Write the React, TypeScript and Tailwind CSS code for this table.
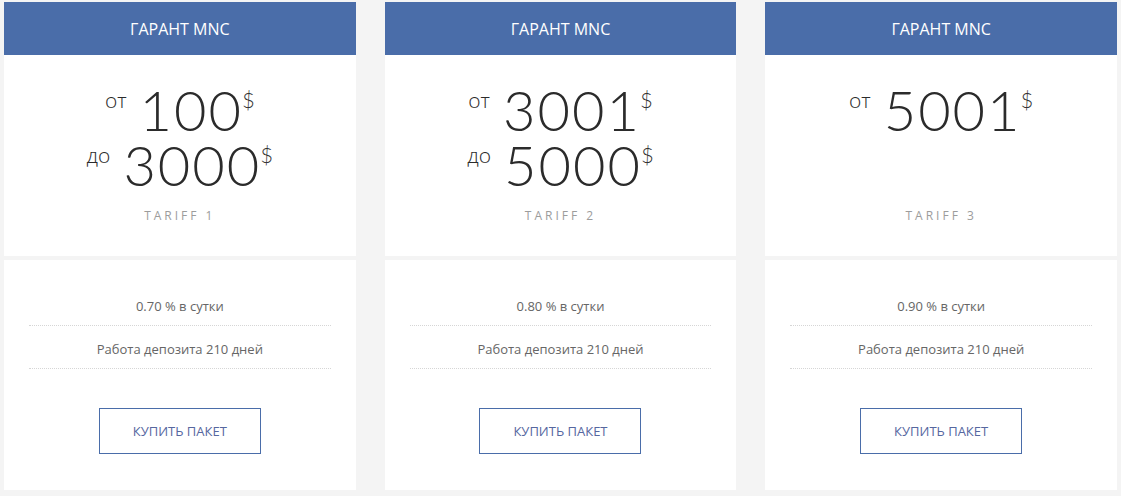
const tariffs = [
  { from: '100', to: '3000', name: 'TARIFF 1', rate: '0.70' },
  { from: '3001', to: '5000', name: 'TARIFF 2', rate: '0.80' },
  { from: '5001', to: null, name: 'TARIFF 3', rate: '0.90' },
];

const numFont = { fontFamily: '"Lato", "Open Sans", sans-serif' };
const textFont = { fontFamily: '"Open Sans", "Noto Sans", sans-serif' };

function PriceRow({ label, value }: { label: string; value: string }) {
  return (
    <div className="flex h-[55px] items-start justify-center">
      <span className="mt-[8px] mr-[13px] text-[21px] leading-none font-light text-[#2b2b2b]" style={textFont}>
        {label}
      </span>
      <span className="text-[56px] leading-[55px] font-light tracking-[2px] text-[#2b2b2b]" style={numFont}>
        {value}
      </span>
      <span className="mt-[7px] -ml-[1px] text-[22px] leading-none font-light text-[#333]" style={numFont}>
        $
      </span>
    </div>
  );
}

function TariffCard({ from, to, name, rate }: (typeof tariffs)[number]) {
  return (
    <div className="flex flex-col">
      <div
        className="flex h-[53px] items-center justify-center bg-[#4a6da9] text-[16px] text-white"
        style={textFont}
      >
        ГАРАНТ MNC
      </div>
      <div className="flex h-[201px] flex-col bg-white pt-[27px]">
        <PriceRow label="от" value={from} />
        {to ? <PriceRow label="до" value={to} /> : <div className="h-[55px]" />}
        <div
          className="mt-[15px] text-center text-[12px] tracking-[3px] text-[#9c9c9c]"
          style={textFont}
        >
          {name}
        </div>
      </div>
      <div className="mt-[4px] flex h-[230px] flex-col bg-white px-[25px] pt-[23px]" style={textFont}>
        <div className="flex h-[43px] items-center justify-center border-b border-dotted border-[#d6d6d6] pt-[5px] text-[13px] text-[#666]">
          {rate} % в сутки
        </div>
        <div className="flex h-[43px] items-center justify-center border-b border-dotted border-[#d6d6d6] pt-[5px] text-[13px] text-[#666]">
          Работа депозита 210 дней
        </div>
        <div className="mt-[39px] flex justify-center">
          <button className="h-[46px] w-[162px] border border-[#4a6da9] pt-[1px] text-[13px] text-[#56679f]">
            КУПИТЬ ПАКЕТ
          </button>
        </div>
      </div>
    </div>
  );
}

export default function App() {
  return (
    <div className="grid min-h-[496px] grid-cols-3 items-start gap-x-[29px] bg-[#f4f4f4] px-[4px] pt-[2px]">
      {tariffs.map((t) => (
        <TariffCard key={t.name} {...t} />
      ))}
    </div>
  );
}
